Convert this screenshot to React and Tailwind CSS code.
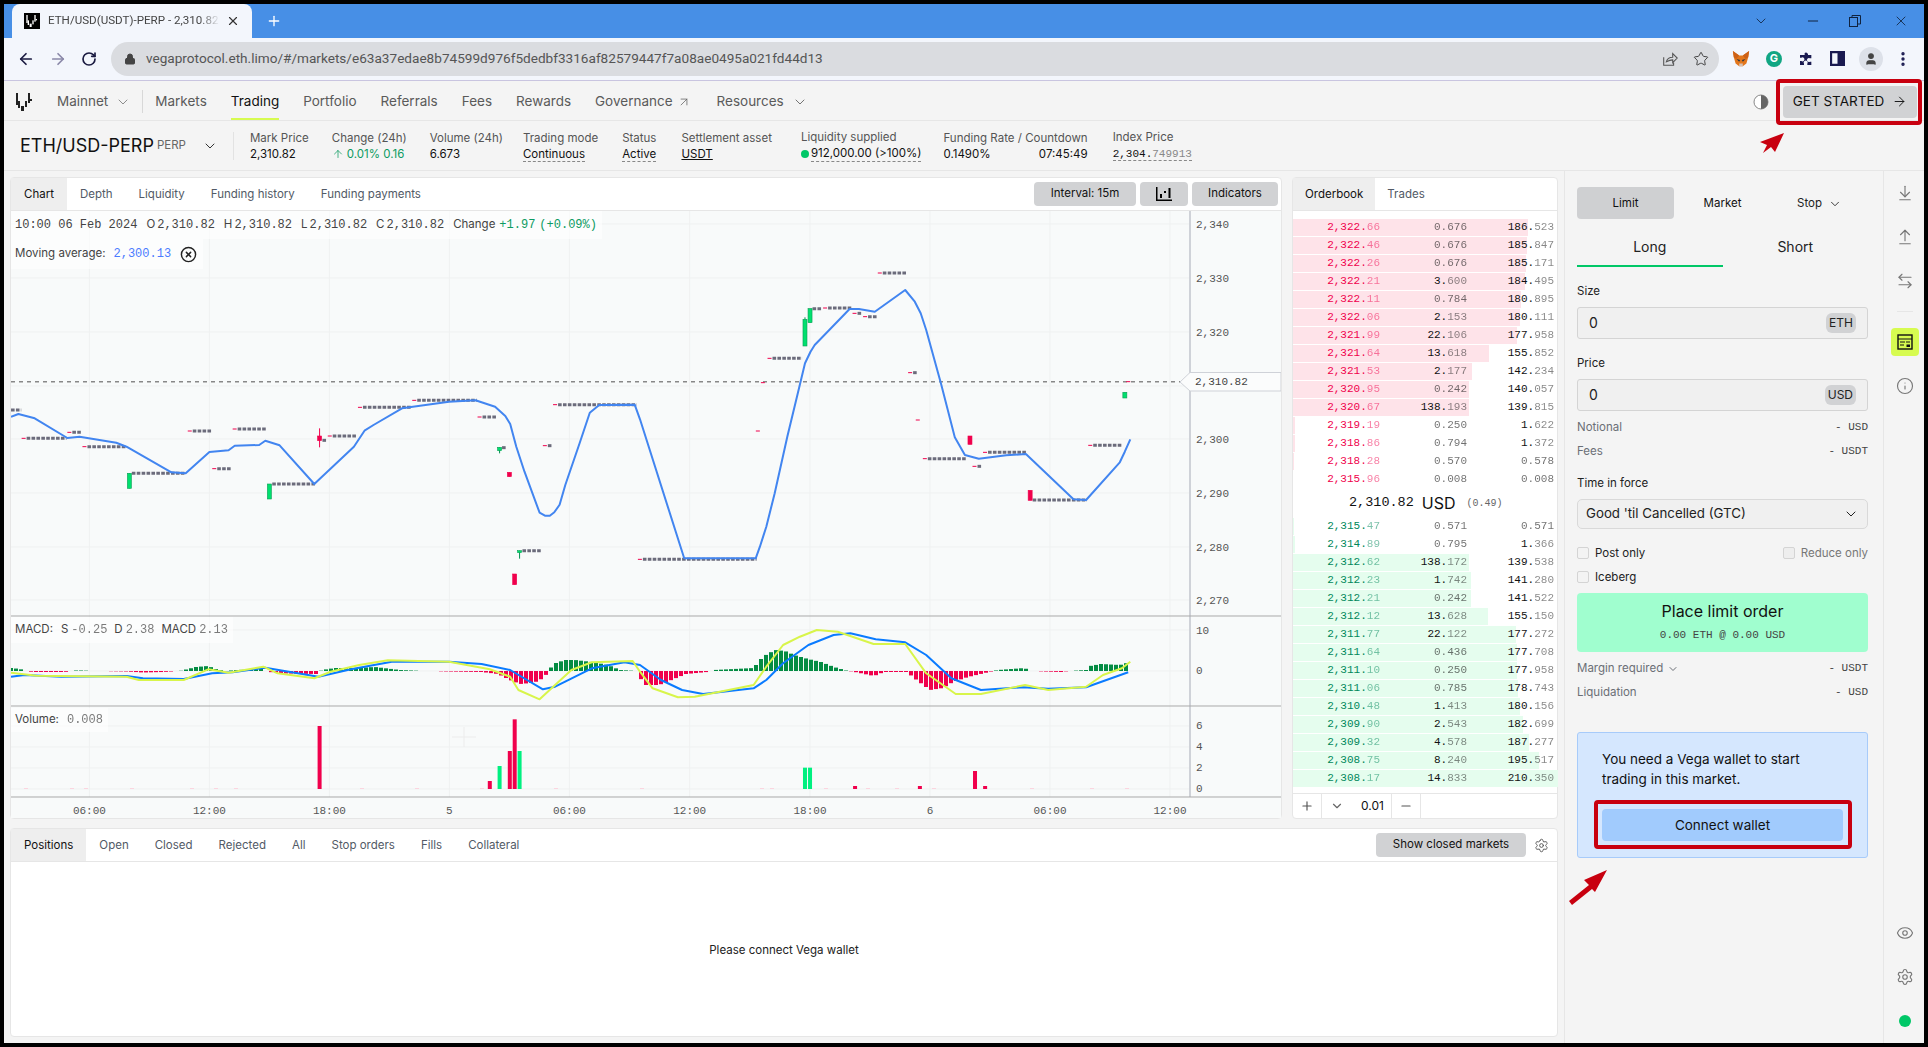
import React from 'react';
import {
  ArrowDownToLine,
  ArrowLeft,
  ArrowLeftRight,
  ArrowRight,
  ArrowUp,
  ArrowUpFromLine,
  ArrowUpRight,
  ChevronDown,
  CircleX,
  Eye,
  Info,
  Lock,
  Minus,
  MoreVertical,
  Plus,
  RotateCw,
  Settings,
  Star,
  User,
  X,
} from 'lucide-react';

// chart traces, read off the crops: each helper maps crop coords to page coords
const p1 = ([x, y]) => [x / 2.45, y / 3 + 210];
const p2 = ([x, y]) => [x / 2.376 + 640, y / 3 + 210];
const m1 = ([x, y]) => [x / 2.45, y / 3 + 610];
const m2 = ([x, y]) => [x / 2.376 + 640, y / 3 + 610];
const toPoints = (list) => list.map(([x, y]) => `${x.toFixed(1)},${y.toFixed(1)}`).join(' ');

const priceLine = [
  ...[[27,620],[45,612],[85,625],[165,684],[195,680],[285,698],[310,710],[420,787],[455,790],[513,726],[560,721],[575,707],[635,705],[650,692],[685,706],[770,822],[867,710],[893,662],[915,645],[985,595],[1100,575],[1165,571],[1213,590],[1238,618],[1250,642],[1265,710],[1285,785],[1322,908],[1335,917],[1347,917],[1358,907],[1371,884],[1385,825],[1420,700],[1445,608],[1468,585],[1555,584]].map(p1),
  ...[[0,628],[105,1045],[275,1045],[285,1010],[300,950],[320,850],[350,680],[375,550],[392,460],[405,425],[415,405],[498,297],[520,297],[558,305],[630,240],[653,275],[667,310],[680,360],[715,520],[748,682],[772,735],[805,746],[870,736],[917,732],[1030,868],[1060,870],[1140,757],[1152,725],[1165,688]].map(p2),
];

const macdLine = [
  ...[[27,200],[60,195],[150,200],[310,198],[350,205],[450,207],[520,190],[570,187],[650,173],[780,200],[860,178],[960,155],[1100,155],[1180,162],[1250,180],[1330,238],[1360,230],[1450,175],[1530,157]].map(m1),
  ...[[0,165],[50,210],[100,240],[150,252],[270,235],[300,210],[340,160],[400,105],[460,75],[500,70],[560,88],[630,97],[680,135],[740,205],[810,240],[910,232],[970,236],[1060,232],[1160,187]].map(m2),
];

const signalLine = [
  ...[[27,188],[90,197],[310,200],[340,210],[450,210],[510,178],[560,188],[645,170],[680,190],[770,205],[810,185],[880,165],[950,151],[1100,155],[1200,178],[1250,200],[1270,240],[1322,268],[1400,180],[1450,157],[1550,153]].map(m1),
  ...[[0,185],[30,235],[90,262],[130,260],[270,225],[300,170],[340,105],[380,80],[420,60],[470,65],[555,102],[630,102],[680,190],[750,252],[810,252],[915,225],[970,240],[1060,230],[1100,195],[1145,175],[1165,155]].map(m2),
];

// flat candles: [x0, x1, y, has red tick]
const flats = [
  ...[[27,52,600,0],[53,163,685,1],[165,200,667,1],[202,310,710,1],[323,455,790,0],[460,518,663,1],[520,567,776,1],[570,653,657,1],[667,775,822,0],[790,800,691,0],[803,873,678,1],[877,1008,592,1],[1010,1168,571,1],[1170,1217,621,1],[1230,1242,713,0],[1280,1328,1022,0],[1330,1352,707,1],[1355,1560,584,1]].map(([a, b, y, r]) => [a / 2.45, b / 2.45, y / 3 + 210, r]),
  ...[[-5,277,1048,1],[303,385,445,1],[410,432,296,0],[435,505,294,1],[505,527,310,1],[530,563,320,1],[565,635,189,1],[637,658,488,1],[672,777,746,1],[790,813,769,1],[815,918,727,1],[933,1062,870,0],[1065,1146,706,1]].map(([a, b, y, r]) => [a / 2.376 + 640, b / 2.376 + 640, y / 3 + 210, r]),
];

const ticks = [[280,663],[292,518],[660,630],[1160,515]].map(p2);

// candles: [x, top, bottom, wickTop, wickBottom, green]
const candles = [
  ...[[317,790,835,790,835,1],[660,822,867,822,867,1],[1224,712,722,712,730,1],[1273,1022,1028,1022,1046,1],[783,678,692,655,712,0],[1248,787,800,787,800,0],[1261,1092,1124,1092,1124,0]].map(([x, t, b, wt, wb, g]) => [x / 2.45, t / 3 + 210, b / 3 + 210, wt / 3 + 210, wb / 3 + 210, g]),
  ...[[392,328,408,322,408,1],[404,296,338,296,338,1],[1152,547,564,547,564,1],[784,678,703,678,703,0],[927,841,871,841,871,0]].map(([x, t, b, wt, wb, g]) => [x / 2.376 + 640, t / 3 + 210, b / 3 + 210, wt / 3 + 210, wb / 3 + 210, g]),
];

const histKnots = [[11,3],[20,2],[26,0],[33,-1],[65,-1],[73,0.5],[82,0.5],[94,0],[127,-0.5],[143,-1.5],[163,-1],[180,0],[188,2],[196,4],[208,5],[216,2],[224,0],[237,1],[261,2],[269,-1],[286,-2.5],[316,-3],[322,1],[335,3],[355,3],[375,4],[400,1],[424,0],[449,-0.5],[482,-1],[498,-3],[510,-9],[520,-13],[531,-12],[539,-10],[547,-3],[549,0],[553,7],[565,11],[575,11],[592,9],[608,6],[620,1],[637,0],[640,-7],[646,-14],[659,-14],[669,-10],[686,-3],[707,-1],[714,1],[754,3],[758,9],[764,15],[775,21],[785,20],[794,16],[808,12],[821,9],[834,4],[846,0.5],[855,-1],[874,-5],[884,-1],[907,-1],[914,-7],[922,-13],[930,-19],[943,-17],[953,-11],[968,-6],[989,-1],[998,1],[1025,3],[1029,0],[1061,-1],[1069,0],[1086,1],[1090,5],[1101,7],[1120,6],[1130,9]];

const histAt = (x) => {
  for (let i = 1; i < histKnots.length; i++) {
    const [x0, v0] = histKnots[i - 1];
    const [x1, v1] = histKnots[i];
    if (x <= x1) return v0 + ((x - x0) / (x1 - x0)) * (v1 - v0);
  }
  return 0;
};
const histBars = Array.from({ length: 225 }, (_, i) => 11 + i * 5);

// volume bars: [x, top, green]
const volumes = [
  ...[[783,348,0],[1200,513,0],[1224,468,1],[1249,423,0],[1261,328,0],[1273,423,1]].map(([x, t, g]) => [x / 2.45, t / 3 + 610, g]),
  ...[[392,473,1],[404,473,1],[511,528,0],[665,528,0],[796,483,0],[820,528,0]].map(([x, t, g]) => [x / 2.376 + 640, t / 3 + 610, g]),
];
const faintVolumes = [24, 70, 84, 130, 190, 214, 234, 360, 415, 480, 554, 640, 760, 770, 824, 866, 895, 932, 1030, 1090, 1125];

const gridX = [89.4, 209.4, 329.4, 449.4, 569.4, 689.7, 810, 930, 1050, 1170];
const timeLabels = ['06:00', '12:00', '18:00', '5', '06:00', '12:00', '18:00', '6', '06:00', '12:00'];
const priceTicks = [[2340, 224], [2330, 278], [2320, 332], [2310, 386], [2300, 439], [2290, 493], [2280, 547], [2270, 600]];

const sells = [
  ['2,322.66', '0.676', '186.523'], ['2,322.46', '0.676', '185.847'], ['2,322.26', '0.676', '185.171'],
  ['2,322.21', '3.600', '184.495'], ['2,322.11', '0.784', '180.895'], ['2,322.06', '2.153', '180.111'],
  ['2,321.99', '22.106', '177.958'], ['2,321.64', '13.618', '155.852'], ['2,321.53', '2.177', '142.234'],
  ['2,320.95', '0.242', '140.057'], ['2,320.67', '138.193', '139.815'], ['2,319.19', '0.250', '1.622'],
  ['2,318.86', '0.794', '1.372'], ['2,318.28', '0.570', '0.578'], ['2,315.96', '0.008', '0.008'],
];
const buys = [
  ['2,315.47', '0.571', '0.571'], ['2,314.89', '0.795', '1.366'], ['2,312.62', '138.172', '139.538'],
  ['2,312.23', '1.742', '141.280'], ['2,312.21', '0.242', '141.522'], ['2,312.12', '13.628', '155.150'],
  ['2,311.77', '22.122', '177.272'], ['2,311.64', '0.436', '177.708'], ['2,311.10', '0.250', '177.958'],
  ['2,311.06', '0.785', '178.743'], ['2,310.48', '1.413', '180.156'], ['2,309.90', '2.543', '182.699'],
  ['2,309.32', '4.578', '187.277'], ['2,308.75', '8.240', '195.517'], ['2,308.17', '14.833', '210.350'],
];

const Fraction = ({ value }) => {
  const [whole, dec] = value.split('.');
  return (
    <span className={whole === '0' ? 'opacity-60' : ''}>
      {whole}.<span className={whole === '0' ? '' : 'opacity-50'}>{dec}</span>
    </span>
  );
};

const BookRow = ({ row, side }) => {
  const width = (parseFloat(row[2]) / 210.35) * 265;
  return (
    <div className="relative h-[18px] font-['Liberation_Mono',monospace] text-[11px] leading-[17px]">
      <div
        className={`absolute left-0 top-0 h-[17px] ${side === 'sell' ? 'bg-[#fee3e9]' : 'bg-[#e5fdee]'}`}
        style={{ width }}
      />
      <div className="relative grid grid-cols-[87px_87px_87px] text-right text-[#111]">
        <span className={side === 'sell' ? 'text-[#f0004c]' : 'text-[#00875a]'}>
          <Fraction value={row[0]} />
        </span>
        <Fraction value={row[1]} />
        <Fraction value={row[2]} />
      </div>
    </div>
  );
};

const Tab = ({ label, active }) => (
  <div className={`flex h-full items-center px-[13px] pt-px ${active ? 'bg-[#eeeeee] text-[#111]' : 'text-[#525a66]'}`}>{label}</div>
);

const VegaLogo = ({ className, color }) => (
  <svg viewBox="0 0 17 18" className={className} fill={color}>
    <rect x="0" y="0" width="2" height="12" />
    <rect x="2" y="8" width="2" height="7" />
    <rect x="5" y="13" width="3" height="5" />
    <rect x="9" y="8" width="2" height="6" />
    <rect x="12" y="0" width="2" height="10" />
    <rect x="14" y="6" width="2" height="2" />
  </svg>
);

const Fox = () => (
  <svg viewBox="0 0 20 20" className="w-[18px] h-[18px]">
    <polygon points="1,1 8,6 12,6 19,1 18,8 16,15 12,18 8,18 4,15 2,8" fill="#e2761b" />
    <polygon points="1,1 8,6 5,10 2,8" fill="#cd6116" />
    <polygon points="19,1 12,6 15,10 18,8" fill="#cd6116" />
    <polygon points="5,10 9,11 8,13" fill="#233447" />
    <polygon points="15,10 11,11 12,13" fill="#233447" />
    <polygon points="8,15 12,15 12,18 8,18" fill="#d7c1b3" />
  </svg>
);

const Mono = ({ children, className = '' }) => (
  <span className={`font-['Liberation_Mono',monospace] text-[12px] ${className}`}>{children}</span>
);

const ChartPanel = () => (
  <div className="flex h-full w-[1272px] flex-col rounded-sm border border-[#e6e6e6] bg-white">
    <div className="flex h-[33px] shrink-0 items-center border-b border-[#e6e6e6] text-[11.5px]">
      <Tab label="Chart" active />
      <Tab label="Depth" />
      <Tab label="Liquidity" />
      <Tab label="Funding history" />
      <Tab label="Funding payments" />
      <div className="ml-auto flex items-center gap-1 pr-[3px] text-[#111]">
        <button className="h-6 w-[102px] rounded-sm bg-[#d1d2d4]">Interval: 15m</button>
        <button className="flex h-6 w-[48px] items-center justify-center rounded-sm bg-[#d1d2d4]">
          <svg viewBox="0 0 16 14" className="h-[14px] w-4" fill="#000">
            <path d="M0 0h1.5v12.5H16V14H0z" />
            <rect x="4" y="7" width="2" height="4" />
            <rect x="8" y="4" width="2" height="2" />
            <rect x="12.5" y="1" width="2" height="10" />
          </svg>
        </button>
        <button className="h-6 w-[86px] rounded-sm bg-[#d1d2d4]">Indicators</button>
      </div>
    </div>
    <div className="relative flex-1 bg-[#f8fafa]">
      <svg width="1270" height="607" viewBox="11 211 1270 607" className="block">
        {gridX.map((x) => (
          <line key={x} x1={x} x2={x} y1="211" y2="797" stroke="#eff1f1" />
        ))}
        {priceTicks.map(([, y]) => (
          <line key={y} x1="11" x2="1190" y1={y} y2={y} stroke="#eff1f1" />
        ))}
        {[630, 671, 726, 747, 768, 789].map((y) => (
          <line key={y} x1="11" x2="1190" y1={y} y2={y} stroke="#eff1f1" />
        ))}

        <line x1="11" x2="1180" y1="381.7" y2="381.7" stroke="#888" strokeWidth="1.5" strokeDasharray="4 4" />
        {flats.map(([a, b, y, red]) => (
          <g key={`${a}-${y}`}>
            {red ? <line x1={a} x2={a + 4} y1={y} y2={y} stroke="#f0004c" /> : null}
            <line x1={a + (red ? 5 : 0)} x2={b} y1={y} y2={y} stroke="#6b6b7b" strokeWidth="3" strokeDasharray="3.6 1.3" />
          </g>
        ))}
        {ticks.map(([x, y]) => (
          <line key={x} x1={x - 2} x2={x + 2} y1={y} y2={y} stroke="#f0004c" />
        ))}
        {candles.map(([x, t, b, wt, wb, green]) => (
          <g key={x}>
            <line x1={x} x2={x} y1={wt} y2={wb} stroke={green ? '#008f4c' : '#f0004c'} />
            <rect x={x - 2} y={t} width="4" height={b - t} fill={green ? '#00e06e' : '#f0004c'} stroke={green ? '#0a9d55' : '#f0004c'} strokeWidth="0.6" />
          </g>
        ))}
        <polyline points={toPoints(priceLine)} fill="none" stroke="#4285f0" strokeWidth="2" strokeLinejoin="round" />

        {histBars.map((x) => {
          const v = histAt(x);
          if (Math.abs(v) < 0.25) return null;
          return <rect key={x} x={x - 2} y={v > 0 ? 671 - v : 671} width="4" height={Math.abs(v)} fill={v > 0 ? '#048c43' : '#f0004c'} />;
        })}
        <polyline points={toPoints(macdLine)} fill="none" stroke="#0a7bff" strokeWidth="2" strokeLinejoin="round" />
        <polyline points={toPoints(signalLine)} fill="none" stroke="#d8f54a" strokeWidth="2" strokeLinejoin="round" />

        <path d="M452 737h24M464 727v20" stroke="#ececec" />
        {faintVolumes.map((x) => (
          <rect key={x} x={x} y="788" width="4" height="1" fill="#fbd5df" />
        ))}
        {volumes.map(([x, t, green]) => (
          <rect key={x} x={x - 2} y={t} width="4" height={789 - t} fill={green ? '#00f080' : '#f0004c'} />
        ))}

        <line x1="1190" x2="1190" y1="211" y2="797" stroke="#cfd2d8" strokeWidth="2" />
        {[616, 706, 797].map((y) => (
          <line key={y} x1="11" x2="1281" y1={y} y2={y} stroke="#a9a9a9" />
        ))}

        <g className="fill-[#555] font-['Liberation_Mono',monospace] text-[11px]">
          {priceTicks
            .filter(([p]) => p !== 2310)
            .map(([p, y]) => (
              <text key={p} x="1196" y={y + 4}>
                {`2,${p - 2000}`}
              </text>
            ))}
          <text x="1196" y="634">10</text>
          <text x="1196" y="674">0</text>
          <text x="1196" y="729">6</text>
          <text x="1196" y="750">4</text>
          <text x="1196" y="771">2</text>
          <text x="1196" y="792">0</text>
          {timeLabels.map((t, i) => (
            <text key={i} x={gridX[i]} y="814" textAnchor="middle">
              {t}
            </text>
          ))}
        </g>

        <polygon points="1180,382 1190,372.5 1281,372.5 1281,391 1190,391" fill="#fbfcfc" stroke="#cfd2d8" />
        <text x="1195" y="385" className="fill-[#444] font-['Liberation_Mono',monospace] text-[11px]">
          2,310.82
        </text>
      </svg>

      {/* legends sit on top of the chart */}
      <div className="absolute left-0 top-0 flex flex-col items-start text-[11.5px] text-[#444]">
        <div className="flex h-[28px] items-center bg-white/60 pl-[4px] pr-[5px]">
          <Mono>10:00 06 Feb 2024</Mono>
          <span className="ml-[9px]">O</span>
          <Mono className="ml-[2px]">2,310.82</Mono>
          <span className="ml-[9px]">H</span>
          <Mono className="ml-[2px]">2,310.82</Mono>
          <span className="ml-[9px]">L</span>
          <Mono className="ml-[2px]">2,310.82</Mono>
          <span className="ml-[9px]">C</span>
          <Mono className="ml-[2px]">2,310.82</Mono>
          <span className="ml-[9px]">Change</span>
          <Mono className="ml-[4px] text-[#0d9b62]">+1.97</Mono>
          <Mono className="ml-[4px] text-[#0d9b62]">(+0.09%)</Mono>
        </div>
        <div className="flex h-[30px] items-center bg-white/60 pl-[4px] pr-[6px]">
          <span>Moving average:</span>
          <Mono className="ml-[8px] text-[#4b7bff]">2,300.13</Mono>
          <CircleX className="ml-[9px] h-[17px] w-[17px] text-[#222]" strokeWidth={2} />
        </div>
      </div>
      <div className="absolute left-0 top-[406px] flex h-[26px] items-center bg-white/60 pl-[4px] pr-[5px] text-[11.5px] text-[#444]">
        <span>MACD:</span>
        <span className="ml-[8px]">S</span>
        <Mono className="ml-[3px] opacity-70">-0.25</Mono>
        <span className="ml-[7px]">D</span>
        <Mono className="ml-[3px] opacity-70">2.38</Mono>
        <span className="ml-[7px]">MACD</span>
        <Mono className="ml-[3px] opacity-70">2.13</Mono>
      </div>
      <div className="absolute left-0 top-[497px] flex h-[24px] items-center bg-white/60 pl-[4px] pr-[5px] text-[11.5px] text-[#444]">
        <span>Volume:</span>
        <Mono className="ml-[8px] opacity-70">0.008</Mono>
      </div>
    </div>
  </div>
);

const OrderBook = () => (
  <div className="flex h-full w-[266px] flex-col rounded-sm border border-[#e6e6e6] bg-white">
    <div className="flex h-[33px] shrink-0 items-center border-b border-[#e6e6e6] text-[11.5px]">
      <div className="flex h-full items-center bg-[#eeeeee] px-3 pt-px text-[#111]">Orderbook</div>
      <div className="px-3 pt-px text-[#525a66]">Trades</div>
    </div>
    <div className="pt-2">
      {sells.map((row) => (
        <BookRow key={row[0]} row={row} side="sell" />
      ))}
    </div>
    <div className="flex h-[29px] items-center pb-px pl-[56px] text-[#111]">
      <span className="font-['Liberation_Mono',monospace] text-[13.5px]">2,310.82</span>
      <span className="ml-[8px] text-base">USD</span>
      <span className="ml-[11px] font-['Liberation_Mono',monospace] text-[10px] text-[#666]">(0.49)</span>
    </div>
    <div>
      {buys.map((row) => (
        <BookRow key={row[0]} row={row} side="buy" />
      ))}
    </div>
    <div className="mt-auto flex h-[25px] items-center border-t border-[#e6e6e6] text-xs text-[#333]">
      <div className="flex h-full w-[29px] items-center justify-center border-r border-[#e6e6e6]">
        <Plus className="h-[14px] w-[14px] text-[#555]" />
      </div>
      <div className="flex h-full w-[70px] items-center border-r border-[#e6e6e6] pl-[8px]">
        <ChevronDown className="h-[14px] w-[14px] text-[#666]" />
        <span className="ml-[17px] text-[#111]">0.01</span>
      </div>
      <div className="flex h-full w-[29px] items-center justify-center border-r border-[#e6e6e6]">
        <Minus className="h-[14px] w-[14px] text-[#555]" />
      </div>
    </div>
  </div>
);

const Positions = () => (
  <div className="flex h-[209px] w-[1548px] flex-col rounded-sm border border-[#e6e6e6] bg-white">
    <div className="flex h-[33px] shrink-0 items-center border-b border-[#e6e6e6] text-[11.5px]">
      <Tab label="Positions" active />
      <Tab label="Open" />
      <Tab label="Closed" />
      <Tab label="Rejected" />
      <Tab label="All" />
      <Tab label="Stop orders" />
      <Tab label="Fills" />
      <Tab label="Collateral" />
      <div className="ml-auto flex items-center">
        <button className="h-6 w-[150px] rounded-sm bg-[#d1d2d4] text-[#111]">Show closed markets</button>
        <div className="flex w-[31px] justify-center">
          <Settings className="h-[15px] w-[15px] text-[#555]" strokeWidth={1.5} />
        </div>
      </div>
    </div>
    <div className="flex flex-1 items-center justify-center pt-[4px] text-[11.5px] text-[#222]">Please connect Vega wallet</div>
  </div>
);

const TicketLabel = ({ children, className = '' }) => (
  <div className={`h-4 text-[11.5px] leading-4 text-[#222] ${className}`}>{children}</div>
);

const TicketInput = ({ unit }) => (
  <div className="mt-2 flex h-8 items-center justify-between rounded-[3px] border border-[#d4d4d4] bg-[#f0f0f0] pl-[11px] pr-[11px] text-sm text-[#222]">
    <span>0</span>
    <span className="rounded-md bg-[#d1d2d4] px-[3px] py-[2px] text-xs leading-4">{unit}</span>
  </div>
);

const TicketStat = ({ label, value, className = '', chevron }) => (
  <div className={`flex h-4 items-center justify-between pt-px text-[11.5px] text-[#6b6f76] ${className}`}>
    <span className="flex items-center gap-1">
      {label}
      {chevron ? <ChevronDown className="h-3 w-3" /> : null}
    </span>
    <span className="font-['Liberation_Mono',monospace] text-[11px] text-[#444]">- {value}</span>
  </div>
);

const Check = ({ label, faded }) => (
  <div className="flex items-center gap-[6px]">
    <span className={`h-3 w-3 rounded-[2px] border border-[#d4d4d4] ${faded ? 'bg-[#eeeeee]' : 'bg-[#f3f3f3]'}`} />
    <span className={`pt-px ${faded ? 'text-[#777]' : 'text-[#222]'}`}>{label}</span>
  </div>
);

const DealTicket = () => (
  <div className="h-full w-[320px] shrink-0 border-x border-[#e6e6e6] pl-3 pr-[15px] pt-4">
    <div className="grid h-8 grid-cols-3 items-center text-[11.5px] text-[#111]">
      <div className="flex h-8 items-center justify-center rounded-sm bg-[#cfd0d2] pt-px">Limit</div>
      <div className="pt-px text-center">Market</div>
      <div className="flex items-center justify-center gap-[6px] pt-px text-[#222]">
        Stop <ChevronDown className="h-[14px] w-[14px]" strokeWidth={1.5} />
      </div>
    </div>
    <div className="mt-[10px] grid h-[38px] grid-cols-2 text-center text-sm text-[#222]">
      <div className="border-b-2 border-[#00c767] pt-[8px]">Long</div>
      <div className="pt-[8px]">Short</div>
    </div>
    <TicketLabel className="mt-4">Size</TicketLabel>
    <TicketInput unit="ETH" />
    <TicketLabel className="mt-4">Price</TicketLabel>
    <TicketInput unit="USD" />
    <TicketStat className="mt-2" label="Notional" value="USD" />
    <TicketStat className="mt-2" label="Fees" value="USDT" />
    <TicketLabel className="mt-4">Time in force</TicketLabel>
    <div className="mt-2 flex h-[30px] items-center justify-between rounded-[5px] border border-[#d9d9d9] bg-[#f0f0f0] pl-2 pr-2 text-[13.3px] text-[#222]">
      <span>Good 'til Cancelled (GTC)</span>
      <ChevronDown className="h-4 w-4" strokeWidth={1.5} />
    </div>
    <div className="mt-4 flex h-4 items-center justify-between text-[11.5px]">
      <Check label="Post only" />
      <Check label="Reduce only" faded />
    </div>
    <div className="mt-2 flex h-4 items-center text-[11.5px]">
      <Check label="Iceberg" />
    </div>
    <div className="mt-2 flex h-[59px] flex-col items-center rounded-sm bg-[#a0fecf] pt-[6px] text-[#111]">
      <div className="text-base leading-6">Place limit order</div>
      <div className="mt-[4px] font-['Liberation_Mono',monospace] text-[11px] text-[#444]">0.00 ETH @ 0.00 USD</div>
    </div>
    <TicketStat className="mt-2" label="Margin required" value="USDT" chevron />
    <TicketStat className="mt-2" label="Liquidation" value="USD" />
    <div className="mt-8 h-[126px] rounded-[3px] border border-[#a7cbfa] bg-[#d5e7fe] px-6 pt-4">
      <div className="text-[13.5px] leading-5 text-[#111]">
        You need a Vega wallet to start
        <br />
        trading in this market.
      </div>
      <button className="relative mt-5 h-8 w-full rounded-sm bg-[#a1cbfd] text-[13.5px] text-[#111]">
        Connect wallet
        <span className="absolute -left-2 -right-[9px] -top-[9px] -bottom-2 rounded border-4 border-[#c8000f]" />
      </button>
    </div>
  </div>
);

const RailIcon = ({ icon: Icon }) => (
  <div className="flex h-11 items-center justify-center text-[#777]">
    <Icon className="h-[18px] w-[18px]" strokeWidth={1.5} />
  </div>
);

const IconRail = () => (
  <div className="flex h-full w-10 shrink-0 flex-col items-center pl-[2px]">
    <RailIcon icon={ArrowDownToLine} />
    <RailIcon icon={ArrowUpFromLine} />
    <RailIcon icon={ArrowLeftRight} />
    <div className="mt-2 h-px w-4 bg-[#e6e6e6]" />
    <div className="mt-4 flex h-7 w-7 items-center justify-center rounded-sm bg-[#d7fb50]">
      <svg viewBox="0 0 16 16" className="h-4 w-4" fill="none" stroke="#111" strokeWidth="1.4">
        <rect x="1" y="1" width="14" height="14" />
        <path d="M1 5h14M3 8h5M9 8h4M3 11h4" strokeWidth="1" />
        <rect x="9.5" y="10.5" width="3.5" height="2.5" fill="#111" stroke="none" />
      </svg>
    </div>
    <div className="mt-2">
      <RailIcon icon={Info} />
    </div>
    <div className="mt-auto">
      <RailIcon icon={Eye} />
      <RailIcon icon={Settings} />
      <div className="flex h-11 items-center justify-center">
        <span className="h-3 w-3 rounded-full bg-[#00c767]" />
      </div>
    </div>
  </div>
);

const BrowserBar = () => (
  <>
    <div className="flex h-[34px] shrink-0 items-center bg-[#478fe6] pl-[8px] text-white">
      <div className="flex h-full w-[240px] items-center rounded-t-lg bg-[#f3f6fc] pl-3 pr-3 text-[#444]">
        <div className="flex h-4 w-4 shrink-0 items-center justify-center bg-black">
          <VegaLogo className="h-3 w-3" color="#fff" />
        </div>
        <span className="ml-2 w-[172px] overflow-hidden whitespace-nowrap font-['Roboto',sans-serif] text-[11.6px] [mask-image:linear-gradient(to_right,black_88%,transparent)]">ETH/USD(USDT)-PERP - 2,310.82</span>
        <X className="ml-auto h-[14px] w-[14px] text-[#333]" />
      </div>
      <Plus className="ml-[14px] h-4 w-4" />
      <div className="ml-auto flex items-center text-[#10233f]">
        <ChevronDown className="mr-[36px] h-4 w-4" strokeWidth={1.25} />
        <Minus className="mr-[28px] h-4 w-4" strokeWidth={1.5} />
        <svg viewBox="0 0 12 12" className="mr-[32px] h-3 w-3" fill="none" stroke="currentColor">
          <rect x="0.5" y="2.5" width="8" height="9" />
          <path d="M3 2.5v-2h8.5v8.5h-3" />
        </svg>
        <X className="mr-[15px] h-[16px] w-[16px]" strokeWidth={1.25} />
      </div>
    </div>
    <div className="flex h-[43px] shrink-0 items-center border-b border-[#c9c5e0] bg-[#f3f6fc] pb-[1px]">
      <ArrowLeft className="ml-[13px] h-[18px] w-[18px] text-[#1a1a40]" strokeWidth={2.25} />
      <ArrowRight className="ml-[14px] h-[18px] w-[18px] text-[#8a88a8]" strokeWidth={2.25} />
      <RotateCw className="ml-[14px] h-[16px] w-[16px] text-[#1a1a40]" strokeWidth={2.5} />
      <div className="ml-[14px] flex h-[34px] w-[1608px] items-center rounded-full bg-[#dadce0] pl-[13px] pr-[10px]">
        <Lock className="h-3 w-3 text-[#444]" fill="#444" />
        <span className="ml-[10px] font-['Roboto',sans-serif] text-[13.6px] text-[#555]">vegaprotocol.eth.limo/#/markets/e63a37edae8b74599d976f5dedbf3316af82579447f7a08ae0495a021fd44d13</span>
        <svg viewBox="0 0 20 20" className="ml-auto h-[18px] w-[18px]" fill="none" stroke="#555" strokeWidth="1.2">
          <path d="M3 8v9h11v-3" />
          <path d="M6 13c1-4 4-5 7-5V4l5 5-5 5v-3c-3 0-5 1-7 2z" />
        </svg>
        <Star className="ml-[14px] h-[16px] w-[16px] text-[#444]" strokeWidth={1.5} />
      </div>
      <div className="flex w-[204px] items-center">
        <div className="ml-[13px] w-[34px]">
          <Fox />
        </div>
        <span className="flex h-[16px] w-[16px] items-center justify-center rounded-full bg-[#11a683] text-[11px] font-bold text-white">G</span>
        <svg viewBox="0 0 24 24" className="ml-[16px] h-[16px] w-[16px]" fill="#1a1a50">
          <path d="M10 3a3 3 0 0 1 5 2v1h5v5h-2a3 3 0 1 0 0 5h2v5h-6v-2a3 3 0 1 0-5 0v2H3v-6h2a3 3 0 1 0 0-5H3V6h7z" />
        </svg>
        <svg viewBox="0 0 14 14" className="ml-[16px] h-[15px] w-[15px]" fill="#1a1a50">
          <path d="M0 0h14v14H0zM2 2v10h5V2z" fillRule="evenodd" />
        </svg>
        <span className="ml-[14px] flex h-6 w-6 items-center justify-center rounded-full bg-[#dde1e9]">
          <User className="h-[14px] w-[14px] text-[#444]" fill="#444" />
        </span>
        <MoreVertical className="ml-[11px] h-[18px] w-[18px] text-[#1a1a50]" strokeWidth={2.5} />
      </div>
    </div>
  </>
);

const AppNav = () => (
  <div className="flex h-10 shrink-0 items-center border-b border-[#e6e6e6] pt-[2px] text-[13.5px] text-[#5a5a5a]">
    <VegaLogo className="ml-3 h-[18px] w-[17px]" color="#222" />
    <span className="ml-6">Mainnet</span>
    <ChevronDown className="ml-[7px] h-4 w-4 text-[#777]" strokeWidth={1.25} />
    <div className="ml-[11px] h-[23px] w-px bg-[#d8d8d8]" />
    <div className="ml-[12px] flex h-full items-center gap-6">
      <span>Markets</span>
      <span className="relative flex h-full items-center text-[#111]">
        Trading
        <span className="absolute bottom-0 left-0 h-[2px] w-full bg-[#d7fb50]" />
      </span>
      <span>Portfolio</span>
      <span>Referrals</span>
      <span>Fees</span>
      <span>Rewards</span>
      <span className="flex items-center gap-1">
        Governance <ArrowUpRight className="h-[14px] w-[14px]" strokeWidth={1.25} />
      </span>
      <span className="ml-[2px] flex items-center gap-2">
        Resources <ChevronDown className="h-4 w-4" strokeWidth={1.25} />
      </span>
    </div>
    <svg viewBox="0 0 16 16" className="ml-auto h-4 w-4">
      <circle cx="8" cy="8" r="7" fill="#fff" stroke="#888" />
      <path d="M8 1a7 7 0 0 1 0 14z" fill="#666" />
    </svg>
    <button className="relative ml-[14px] mr-[7px] flex h-8 w-[134px] items-center justify-center gap-2 rounded-sm bg-[#d1d2d4] text-[13.5px] text-[#111]">
      GET STARTED <ArrowRight className="h-[15px] w-[15px]" strokeWidth={1.5} />
      <span className="absolute -left-[7px] -right-[5px] -top-[7px] -bottom-[7px] rounded border-4 border-[#c8000f]" />
    </button>
  </div>
);

const Stat = ({ label, children, className = '' }) => (
  <div className={`text-[11.5px] ${className}`}>
    <div className="leading-4 text-[#555]">{label}</div>
    <div className="leading-4 text-[#111]">{children}</div>
  </div>
);

const Dotted = ({ children }) => <span className="border-b border-dashed border-[#888]">{children}</span>;

const MarketHeader = () => (
  <div className="flex h-[50px] shrink-0 items-center border-b border-[#e6e6e6]">
    <span className="ml-4 text-lg text-[#111]">ETH/USD-PERP</span>
    <span className="ml-[3px] text-[11.5px] text-[#666]">PERP</span>
    <ChevronDown className="ml-[16px] h-4 w-4 text-[#333]" strokeWidth={1.5} />
    <div className="ml-[15px] h-7 w-px bg-[#e2e2e2]" />
    <div className="ml-[16px] flex items-center gap-6">
      <Stat label="Mark Price">2,310.82</Stat>
      <Stat label="Change (24h)" className="-ml-px">
        <span className="flex items-center gap-[3px] text-[#0d9b62]">
          <ArrowUp className="h-3 w-3" strokeWidth={1.5} /> 0.01% 0.16
        </span>
      </Stat>
      <Stat label="Volume (24h)" className="-ml-px">6.673</Stat>
      <Stat label="Trading mode" className="-ml-[4px]">
        <Dotted>Continuous</Dotted>
      </Stat>
      <Stat label="Status">
        <Dotted>Active</Dotted>
      </Stat>
      <Stat label="Settlement asset" className="ml-px">
        <span className="underline">USDT</span>
      </Stat>
      <Stat label="Liquidity supplied" className="ml-[5px]">
        <span className="flex items-center gap-[2px]">
          <span className="h-2 w-2 rounded-full bg-[#00c767]" />
          <Dotted>912,000.00 (&gt;100%)</Dotted>
        </span>
      </Stat>
      <Stat label="Funding Rate / Countdown" className="-ml-[2px]">
        <span className="flex justify-between">
          <span>0.1490%</span>
          <span>07:45:49</span>
        </span>
      </Stat>
      <Stat label="Index Price" className="ml-px">
        <span className="border-b border-dashed border-[#888] font-['Liberation_Mono',monospace] text-[11px]">
          2,304.<span className="text-[#888]">749913</span>
        </span>
      </Stat>
    </div>
  </div>
);

export default function App() {
  return (
    <div className="relative flex h-[1047px] w-[1928px] flex-col overflow-hidden border-4 border-black bg-[#f4f4f4] font-['Inter',sans-serif]">
      <BrowserBar />
      <AppNav />
      <MarketHeader />
      <div className="flex min-h-0 flex-1">
        <div className="flex w-[1560px] shrink-0 flex-col gap-[9px] pl-[6px] pt-[6px]">
          <div className="flex h-[642px] gap-[10px]">
            <ChartPanel />
            <OrderBook />
          </div>
          <Positions />
        </div>
        <DealTicket />
        <IconRail />
      </div>

      {/* red annotation arrows drawn over the page */}
      <svg className="pointer-events-none absolute -left-1 -top-1" width="1928" height="1047" fill="#c8000f">
        <polygon points="1784,133 1760,142 1767,145 1763,153 1771,147 1775,152" />
        <polygon points="1607,870 1584,880 1589,885 1569,901 1572,905 1592,889 1595,892" />
      </svg>
    </div>
  );
}
